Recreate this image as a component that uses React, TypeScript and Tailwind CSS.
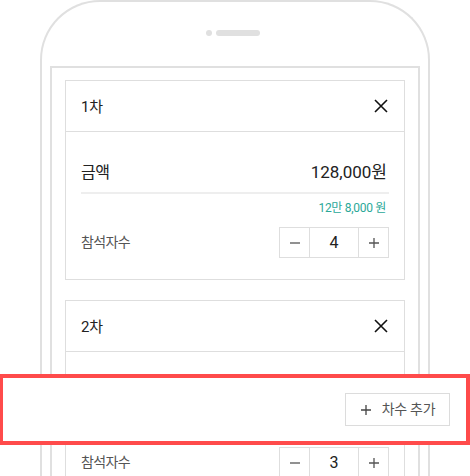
import React from "react";

const font = { fontFamily: 'Roboto, "Noto Sans CJK KR", "Noto Sans", sans-serif' };

function CloseIcon() {
  return (
    <svg width="14" height="14" viewBox="0 0 14 14" className="block">
      <path d="M1 1 L13 13 M13 1 L1 13" stroke="#111" strokeWidth="1.6" fill="none" />
    </svg>
  );
}

function Minus() {
  return (
    <svg width="12" height="12" viewBox="0 0 12 12" className="block">
      <path d="M1 6 H11" stroke="#555" strokeWidth="1.3" />
    </svg>
  );
}

function Plus({ color = "#555" }: { color?: string }) {
  return (
    <svg width="12" height="12" viewBox="0 0 12 12" className="block">
      <path d="M1 6 H11 M6 1 V11" stroke={color} strokeWidth="1.3" />
    </svg>
  );
}

function Card({ title, count }: { title: string; count: number }) {
  return (
    <div className="border border-[#dedede] bg-white">
      <div className="h-[51px] flex items-center justify-between px-[15px] border-b border-[#dedede]">
        <span className="text-[15px] text-[#222] tracking-[-0.3px] pt-[2px]">{title}</span>
        <span className="mr-[1px]"><CloseIcon /></span>
      </div>
      <div className="px-[15px] pt-[27px] pb-[21px]">
        <div className="flex items-center justify-between h-[28px]">
          <span className="text-[16px] text-[#222] tracking-[-0.5px]">금액</span>
          <span className="text-[17px] text-[#222] mr-[2px]">128,000원</span>
        </div>
        <div className="h-[2px] bg-[#eeeeee] mt-[5px]" />
        <div className="flex justify-end mt-[6px] h-[16px] items-center">
          <span className="text-[12px] text-[#2aa898] mr-[3px] tracking-[-0.3px]">12만 8,000 원</span>
        </div>
        <div className="flex items-center justify-between mt-[11px]">
          <span className="text-[14px] text-[#555] tracking-[-0.6px]">참석자수</span>
          <div className="flex h-[31px] border border-[#dedede]">
            <div className="w-[30px] flex items-center justify-center border-r border-[#dedede]">
              <Minus />
            </div>
            <div className="w-[49px] flex items-center justify-center border-r border-[#dedede] text-[16px] text-[#222]">
              {count}
            </div>
            <div className="w-[29px] flex items-center justify-center">
              <Plus />
            </div>
          </div>
        </div>
      </div>
    </div>
  );
}

export default function App() {
  return (
    <div className="relative w-[470px] h-[476px] overflow-hidden bg-white" style={font}>
      <div className="ml-[40px] w-[390px] h-[600px] rounded-t-[60px] border-2 border-b-0 border-[#e0e0e0] pt-[28px] px-[8px]">
        <div className="flex items-center justify-center gap-[4px] h-[6px] mr-[4px]">
          <div className="w-[6px] h-[6px] rounded-full bg-[#e0e0e0]" />
          <div className="w-[44px] h-[6px] rounded-full bg-[#e0e0e0]" />
        </div>
        <div className="mt-[30px] border-2 border-[#e0e0e0] h-[600px] px-[13px] pt-[12px] flex flex-col gap-[20px]">
          <Card title="1차" count={4} />
          <Card title="2차" count={3} />
        </div>
      </div>

      <div className="absolute left-[-1px] right-0 top-[374px] h-[71px] border-4 border-[#ff4b4b] bg-white flex items-center justify-end pr-[16px]">
        <div className="h-[33px] w-[105px] border border-[#dcdcdc] flex items-center justify-center gap-[10px] bg-white">
          <Plus color="#444" />
          <span className="text-[14px] text-[#555] tracking-[-0.3px]">차수 추가</span>
        </div>
      </div>
    </div>
  );
}
